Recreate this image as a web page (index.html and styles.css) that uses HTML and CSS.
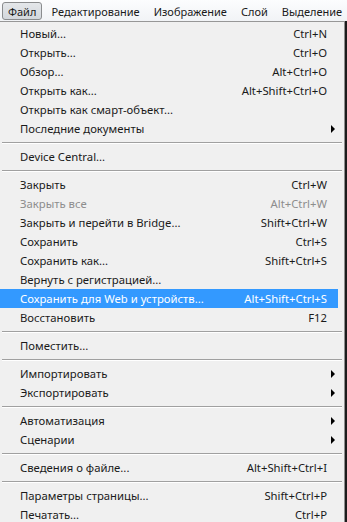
FILE: index.html
```html
<!DOCTYPE html>
<html lang="ru">
<head>
<meta charset="utf-8">
<title>Файл</title>
<link rel="stylesheet" href="styles.css">
</head>
<body>
<div class="menubar">
  <span class="mb-item mb-active">Файл</span>
  <span class="mb-item">Редактирование</span>
  <span class="mb-item">Изображение</span>
  <span class="mb-item">Слой</span>
  <span class="mb-item">Выделение</span>
</div>
<div class="menu">
  <div class="row"><span>Новый...</span><span class="key">Ctrl+N</span></div>
  <div class="row"><span>Открыть...</span><span class="key">Ctrl+O</span></div>
  <div class="row"><span>Обзор...</span><span class="key">Alt+Ctrl+O</span></div>
  <div class="row"><span>Открыть как...</span><span class="key">Alt+Shift+Ctrl+O</span></div>
  <div class="row"><span>Открыть как смарт-объект...</span></div>
  <div class="row sub"><span>Последние документы</span><i class="arrow"></i></div>
  <div class="sep"></div>
  <div class="row"><span>Device Central...</span></div>
  <div class="sep"></div>
  <div class="row"><span>Закрыть</span><span class="key">Ctrl+W</span></div>
  <div class="row disabled"><span>Закрыть все</span><span class="key">Alt+Ctrl+W</span></div>
  <div class="row"><span>Закрыть и перейти в Bridge...</span><span class="key">Shift+Ctrl+W</span></div>
  <div class="row"><span>Сохранить</span><span class="key">Ctrl+S</span></div>
  <div class="row"><span>Сохранить как...</span><span class="key">Shift+Ctrl+S</span></div>
  <div class="row"><span>Вернуть с регистрацией...</span></div>
  <div class="row selected"><span>Сохранить для Web и устройств...</span><span class="key">Alt+Shift+Ctrl+S</span></div>
  <div class="row"><span>Восстановить</span><span class="key">F12</span></div>
  <div class="sep"></div>
  <div class="row"><span>Поместить...</span></div>
  <div class="sep"></div>
  <div class="row sub"><span>Импортировать</span><i class="arrow"></i></div>
  <div class="row sub"><span>Экспортировать</span><i class="arrow"></i></div>
  <div class="sep"></div>
  <div class="row sub"><span>Автоматизация</span><i class="arrow"></i></div>
  <div class="row sub"><span>Сценарии</span><i class="arrow"></i></div>
  <div class="sep"></div>
  <div class="row"><span>Сведения о файле...</span><span class="key">Alt+Shift+Ctrl+I</span></div>
  <div class="sep"></div>
  <div class="row"><span>Параметры страницы...</span><span class="key">Shift+Ctrl+P</span></div>
  <div class="row"><span>Печатать...</span><span class="key">Ctrl+P</span></div>
</div>
</body>
</html>
```
FILE: styles.css
```css
html, body {
  margin: 0;
  padding: 0;
  background: #1c1c1c;
}
body {
  font-family: "Noto Sans", "Open Sans", sans-serif;
  font-size: 11.3px;
  color: #1a1a1a;
  width: 347px;
  height: 522px;
  overflow: hidden;
}
.menubar {
  height: 21px;
  display: flex;
  align-items: center;
  background: linear-gradient(#fcfdfe, #f1f3f6);
  padding-left: 2px;
  box-sizing: border-box;
  white-space: nowrap;
  font-size: 11px;
}
.mb-item {
  padding: 0 6px 0 6px;
  height: 18px;
  line-height: 17px;
  box-sizing: border-box;
  border: 1px solid transparent;
  margin-right: 0;
}
.mb-active {
  background: linear-gradient(#e4e7ea, #d3d7dc);
  border-color: #8a8c8e;
  border-radius: 3px;
  margin-top: 1px;
  padding: 0 5px 0 5px;
  margin-right: 2px;
}
.menu {
  width: 345px;
  box-sizing: border-box;
  background: #f0f0f0;
  border-top: 1px solid #979797;
  border-right: 1px solid #8f8f8f;
  padding: 2px 0 0 0;
  height: 501px;
}
.row {
  height: 19px;
  display: flex;
  align-items: center;
  justify-content: space-between;
  padding: 0 17px 0 20px;
  white-space: nowrap;
  line-height: 19px;
}
.row.sub {
  padding-right: 9px;
}
.row.selected {
  background: #3399ff;
  color: #ffffff;
  margin-right: 6px;
  padding-right: 11px;
}
.row.disabled {
  color: #8d8d8d;
}
.arrow {
  width: 0;
  height: 0;
  border-top: 4px solid transparent;
  border-bottom: 4px solid transparent;
  border-left: 4px solid #000;
}
.sep {
  height: 9px;
  display: flex;
  flex-direction: column;
  justify-content: center;
  padding: 0 2px;
}
.sep::before {
  content: "";
  display: block;
  height: 1px;
  background: #a0a0a0;
}
.sep::after {
  content: "";
  display: block;
  height: 1px;
  background: #ffffff;
}
```
